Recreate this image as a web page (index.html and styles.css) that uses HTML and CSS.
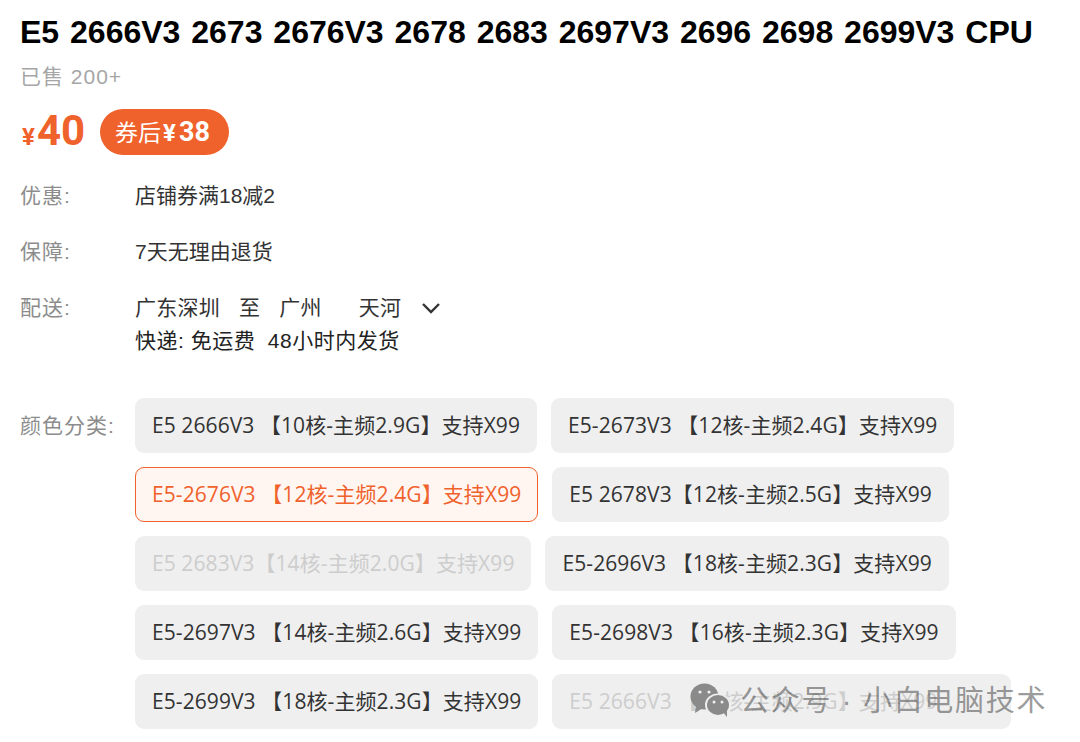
FILE: index.html
```html
<!DOCTYPE html>
<html lang="en">
<head>
    <meta charset="UTF-8">
    <meta name="viewport" content="width=device-width, initial-scale=1.0">
    <title>E5 CPU</title>
    <link rel="stylesheet" href="styles.css">
</head>
<body>

    <h1 class="title">E5 2666V3 2673 2676V3 2678 2683 2697V3 2696 2698 2699V3 CPU</h1>
    <div class="sold">已售 200+</div>

    <div class="price-row">
        <span class="price"><span class="yen">¥</span>40</span>
        <span class="coupon">券后<b class="coupon-yen">¥</b><b>38</b></span>
    </div>

    <div class="info-row">
        <div class="label">优惠:</div>
        <div class="value">店铺券满18减2</div>
    </div>
    <div class="info-row">
        <div class="label">保障:</div>
        <div class="value">7天无理由退货</div>
    </div>
    <div class="info-row">
        <div class="label">配送:</div>
        <div class="value">
            <div class="ship-line">
                <span>广东深圳</span><span>至</span><span>广州</span><span class="area">天河</span>
                <svg class="chevron" width="20" height="12" viewBox="0 0 20 12"><path d="M2 2 L10 10 L18 2" fill="none" stroke="#333" stroke-width="2.4"/></svg>
            </div>
            <div class="ship-note">快递: 免运费&nbsp; 48小时内发货</div>
        </div>
    </div>

    <div class="sku-row">
        <div class="label">颜色分类:</div>
        <div class="sku-list">
            <div class="chip">E5 2666V3 【10核-主频2.9G】支持X99</div>
            <div class="chip">E5-2673V3 【12核-主频2.4G】支持X99</div>
            <div class="chip active">E5-2676V3 【12核-主频2.4G】支持X99</div>
            <div class="chip">E5 2678V3【12核-主频2.5G】支持X99</div>
            <div class="chip disabled">E5 2683V3【14核-主频2.0G】支持X99</div>
            <div class="chip">E5-2696V3 【18核-主频2.3G】支持X99</div>
            <div class="chip">E5-2697V3 【14核-主频2.6G】支持X99</div>
            <div class="chip">E5-2698V3 【16核-主频2.3G】支持X99</div>
            <div class="chip">E5-2699V3 【18核-主频2.3G】支持X99</div>
            <div class="chip disabled long">E5 2666V3 【10核-主频2.9G】支持X99</div>
        </div>
    </div>

    <div class="watermark">
        <svg class="wechat" width="42" height="35" viewBox="0 0 42 35">
            <ellipse cx="14.5" cy="13.5" rx="14" ry="13" fill="#8a8a8a"/>
            <path d="M6 22 L5 30 L13 25 Z" fill="#8a8a8a"/>
            <ellipse cx="28" cy="22" rx="13" ry="11.5" fill="#efefef"/>
            <ellipse cx="28" cy="22" rx="11" ry="10" fill="#8a8a8a"/>
            <path d="M33 29 L37 34 L37 26 Z" fill="#8a8a8a"/>
            <circle cx="10" cy="9" r="1.6" fill="#efefef"/>
            <circle cx="19" cy="9" r="1.6" fill="#efefef"/>
            <circle cx="24" cy="19" r="1.5" fill="#efefef"/>
            <circle cx="32" cy="19" r="1.5" fill="#efefef"/>
        </svg>
        <span class="watermark-text">公众号 · 小白电脑技术</span>
    </div>

</body>
</html>
```

FILE: styles.css
```css
* {
    box-sizing: border-box;
}
html, body {
    height: 742px;
    overflow: hidden;
}
body {
    margin: 0;
    padding: 15px 0 0 20px;
    position: relative;
    background: #fff;
    font-family: "Liberation Sans", "Noto Sans CJK SC", sans-serif;
    color: #333;
}
.title {
    margin: 0;
    font-size: 32px;
    line-height: 34px;
    font-weight: bold;
    color: #000;
    word-spacing: 2px;
    white-space: nowrap;
}
.sold {
    margin-top: 14px;
    font-size: 21px;
    letter-spacing: 1px;
    line-height: 28px;
    color: #a6a6a6;
}
.price-row {
    display: flex;
    align-items: center;
    margin-top: 18px;
    height: 46px;
}
.price {
    padding-top: 3px;
    color: #f0622c;
    font-family: "Roboto", "Liberation Sans", sans-serif;
    font-size: 42px;
    font-weight: bold;
    line-height: 46px;
}
.yen {
    font-size: 24px;
    margin: 0 2px 0 2px;
}
.coupon {
    margin-left: 15px;
    height: 46px;
    padding: 0 19px 0 15px;
    border-radius: 23px;
    background: #f0622c;
    color: #fff;
    font-size: 23px;
    line-height: 46px;
    white-space: nowrap;
}
.coupon b {
    font-family: "Roboto", "Liberation Sans", sans-serif;
    font-size: 27px;
}
.coupon .coupon-yen {
    font-size: 24px;
    margin: 0 3px 0 2px;
}
.info-row {
    display: flex;
    margin-top: 28px;
    font-size: 21px;
    line-height: 28px;
}
.price-row + .info-row {
    margin-top: 27px;
}
.label {
    width: 115px;
    flex-shrink: 0;
    color: #8c8c8c;
    font-size: 21px;
    letter-spacing: 1px;
    line-height: 28px;
}
.value {
    color: #333;
}
.ship-line {
    display: flex;
    align-items: center;
    gap: 19px;
    letter-spacing: 0.25px;
}
.ship-line .area {
    margin-left: 18px;
}
.chevron {
    margin-left: 1px;
}
.ship-note {
    margin-top: 5px;
    letter-spacing: 0.5px;
    color: #222;
}
.sku-row {
    display: flex;
    margin-top: 43px;
}
.sku-row .label {
    padding-top: 14px;
}
.sku-list {
    width: 900px;
    display: flex;
    flex-wrap: wrap;
    gap: 14px;
}
.chip {
    height: 55px;
    padding: 0 17px;
    border-radius: 9px;
    background: #efefef;
    color: #333;
    font-family: "Open Sans", "Noto Sans CJK SC", sans-serif;
    font-size: 21px;
    letter-spacing: 0.08px;
    line-height: 55px;
    white-space: nowrap;
}
.chip.active {
    background: #fff6f2;
    color: #f0622c;
    border: 1px solid #f0622c;
    line-height: 53px;
    padding: 0 16px;
}
.chip.disabled {
    color: #cdcdcd;
}
.chip.long {
    padding-right: 74px;
}
.watermark {
    position: absolute;
    left: 690px;
    top: 682px;
    display: flex;
    align-items: center;
    gap: 8px;
    font-size: 29px;
    line-height: 35px;
    letter-spacing: 1.7px;
    color: rgba(70, 70, 70, 0.55);
    white-space: nowrap;
}
.watermark-text {
    padding-top: 2px;
}
```
